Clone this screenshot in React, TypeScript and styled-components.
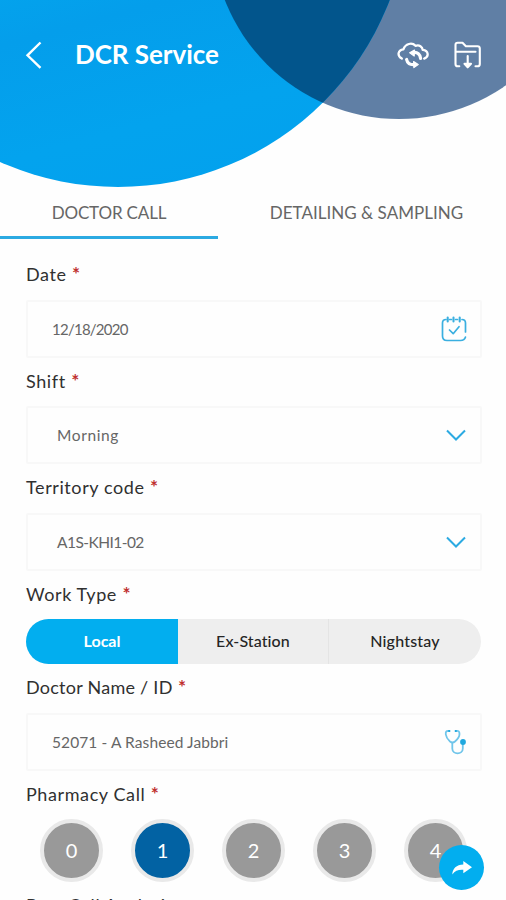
import React from "react";
import styled, { createGlobalStyle } from "styled-components";

const GlobalStyle = createGlobalStyle`
  *, *::before, *::after { box-sizing: border-box; }
  body { margin: 0; background: #fefefe; }
  button { font: inherit; border: 0; padding: 0; margin: 0; background: none; color: inherit; }
`;

const Screen = styled.div`
  position: relative;
  width: 506px;
  height: 900px;
  overflow: hidden;
  background: #fefefe;
  font-family: Lato, "Noto Sans", sans-serif;
  color: #303030;
`;

const Header = styled.header`
  position: relative;
  height: 188px;
  overflow: hidden;
`;

const Disc = styled.div<{ $x: number; $y: number; $r: number; $fill: string }>`
  position: absolute;
  left: ${(p) => p.$x - p.$r}px;
  top: ${(p) => p.$y - p.$r}px;
  width: ${(p) => p.$r * 2}px;
  height: ${(p) => p.$r * 2}px;
  border-radius: 50%;
  overflow: hidden;
  background: ${(p) => p.$fill};
`;

const TitleBar = styled.div`
  position: relative;
  display: flex;
  align-items: center;
  height: 110px;
  padding: 0 23px 0 24px;
  color: #fff;
`;

const Title = styled.h1`
  flex: 1;
  margin: 0 0 2px 33px;
  font-size: 26px;
  line-height: 32px;
  font-weight: 700;
  letter-spacing: -0.05px;
`;

const IconButton = styled.button<{ $gap?: number }>`
  display: flex;
  margin-left: ${(p) => p.$gap ?? 0}px;
`;

const Tabs = styled.nav`
  display: flex;
  height: 51px;
`;

const Tab = styled.button<{ $active?: boolean; $width: number; $spacing: number }>`
  flex: none;
  width: ${(p) => p.$width}px;
  border-bottom: 3px solid ${(p) => (p.$active ? "#2caae2" : "transparent")};
  font-size: 17px;
  letter-spacing: ${(p) => p.$spacing}px;
  color: #666;
`;

const Form = styled.main`
  padding: 12px 24px 0 26px;
`;

const Label = styled.div<{ $spacing?: number; $line?: number }>`
  height: 48.5px;
  line-height: ${(p) => p.$line ?? 47}px;
  font-size: 18px;
  letter-spacing: ${(p) => p.$spacing ?? 0.6}px;
  color: #303030;
  white-space: nowrap;
`;

const Required = styled.span`
  margin-left: 5.5px;
  color: #c0302f;
  font-size: 19px;
  font-weight: 700;
  line-height: 1;
`;

const Field = styled.div<{ $indent: number; $spacing: number; $end?: number; $size?: number }>`
  display: flex;
  align-items: center;
  justify-content: space-between;
  height: 58px;
  padding: 0 ${(p) => p.$end ?? 13}px 0 ${(p) => p.$indent}px;
  border: 2px solid #f8f8f8;
  border-radius: 2px;
  background: #fefefe;
  font-size: ${(p) => p.$size ?? 15.5}px;
  letter-spacing: ${(p) => p.$spacing}px;
  color: #666;
`;

const Segments = styled.div`
  display: grid;
  grid-template-columns: 152px 151px 1fr;
  width: 455px;
  height: 45px;
  border-radius: 23px;
  overflow: hidden;
  background: #eeeeee;
`;

const Segment = styled.button<{ $active?: boolean; $divided?: boolean; $spacing: number }>`
  padding-bottom: 2px;
  border-right: ${(p) => (p.$divided ? "1px solid #e4e4e4" : "0")};
  background: ${(p) => (p.$active ? "#02aeef" : "transparent")};
  color: ${(p) => (p.$active ? "#fff" : "#252525")};
  font-size: 16px;
  font-weight: ${(p) => (p.$active ? 700 : 500)};
  letter-spacing: ${(p) => p.$spacing}px;
`;

const Counts = styled.div`
  display: flex;
  gap: 28px;
  height: 63px;
  margin: 0 -40px 0 14px;
`;

const Count = styled.button<{ $active?: boolean }>`
  flex: none;
  width: 63px;
  height: 63px;
  padding-bottom: 2px;
  border: 4px solid #e9e9e9;
  border-radius: 50%;
  background: ${(p) => (p.$active ? "#0262a3" : "#999999")};
  color: #fff;
  font-size: 20px;
`;

const ShareButton = styled.button`
  position: absolute;
  left: 439px;
  top: 845px;
  display: flex;
  align-items: center;
  justify-content: center;
  width: 45px;
  height: 45px;
  border-radius: 50%;
  background: #02aeef;
`;

const BackIcon = () => (
  <svg width="18" height="30" viewBox="0 0 18 30" fill="none" stroke="#fff" strokeWidth="2.4">
    <path d="M16.500 2.500 3.500 15.300l13 12.500" />
  </svg>
);

const CloudSyncIcon = () => (
  <svg width="32" height="28" viewBox="0 0 32 28" fill="none" stroke="#fff" strokeWidth="2.3" strokeLinecap="round" strokeLinejoin="round">
    <path d="M4.800 17.600C-.2 14.800.8 8.900 6.400 8.300C8.400 2.600 15 1 18.500 4.800C22.500 3.600 25.400 5.700 25.700 8.900C31.800 9.600 32.200 15.800 27.200 17.600" />
    <path d="M16.500 11.500C20.500 11 23.200 13.300 23.600 17.500" strokeWidth="3.200" />
    <path d="m17.500 9-4.800 2.700 4.500 3.300z" fill="#fff" strokeWidth="1.2" />
    <path d="M9.600 18.500c.8 3.600 3.600 5.300 7.200 5.200" strokeWidth="3.200" />
    <path d="m16.600 20.600 4.600 3-4.300 3z" fill="#fff" strokeWidth="1.200" />
  </svg>
);

const FolderDownIcon = () => (
  <svg width="30" height="28" viewBox="0 0 30 28" fill="none" stroke="#fff" strokeWidth="2.1" strokeLinecap="round" strokeLinejoin="round">
    <path d="M6.300 25.300H4.700Q2.500 25.300 2.500 23V4Q2.500 1.700 4.700 1.700h4.800l3.400 3.500h11.600q2.300 0 2.300 2.300V23q0 2.300-2.300 2.300h-2" />
    <path d="M3 10.800h19.500M14.700 15v10" />
    <path d="m11.500 22.800 3.200 3.500 3.300-3.500z" fill="#fff" />
  </svg>
);

const CalendarIcon = () => (
  <svg width="28" height="28" viewBox="0 0 28 28" fill="none" stroke="#3aafe0" strokeWidth="1.7" strokeLinecap="round" strokeLinejoin="round">
    <path d="M6 4.500Q2.500 4.500 2.500 8v13q0 4.500 4.500 4.500h13.500q4 0 5-3.500M9.500 4.500h2M15.500 4.500h2M22 4.500q3.500 0 3.500 3.500v9" />
    <path d="M7.700 2.500v4M13.500 2.500v4M19.700 2.500v4" strokeWidth="2.100" />
    <path d="m9.500 15 3.700 3.700 5.800-7" />
  </svg>
);

const ChevronIcon = () => (
  <svg width="22" height="14" viewBox="0 0 22 14" fill="none" stroke="#2caae2" strokeWidth="2">
    <path d="m2 2.500 9 9 9-9" />
  </svg>
);

const StethoscopeIcon = () => (
  <svg width="24" height="28" viewBox="0 0 24 28" fill="none" stroke="#70c5ea" strokeWidth="1.8" strokeLinecap="round">
    <path d="M5.300 3C2 2.500 1.500 4 1.800 6.500C2.200 9.500 4 11.700 6 13.500q2.500 2 5 0C14 11 15.500 8.500 15.500 6C15.500 3.500 14.500 2.500 12 3" />
    <path d="M8.300 15v5.500c0 6.500 10.500 6.500 10.500 0V17" />
    <circle cx="19" cy="14" r="2.900" fill="#20a8df" stroke="none" />
    <path d="M5 3h.5M11.500 3h.5" stroke="#20a8df" />
  </svg>
);

const ShareIcon = () => (
  <svg width="22" height="16" viewBox="0 0 22 16">
    <path d="M12.300 1 21 7.300l-8.700 6V9.800C7.300 9.500 4 10.800 1.300 14.500C1.500 8.500 5.500 4.800 12.300 4.500z" fill="#fff" />
  </svg>
);

const BLUE = "linear-gradient(165deg, #02aef0 42%, #049eeb 66%, #03a3ee 82%, #03a0ed 100%)";

export default function App() {
  return (
    <Screen>
      <GlobalStyle />
      <Header>
        <Disc $x={399} $y={-68} $r={187} $fill="#607fa5" />
        <Disc $x={118} $y={-104} $r={291} $fill={BLUE}>
          <Disc $x={572} $y={327} $r={187} $fill="#02558c" />
        </Disc>
        <TitleBar>
          <IconButton aria-label="Back"><BackIcon /></IconButton>
          <Title>DCR Service</Title>
          <IconButton aria-label="Sync"><CloudSyncIcon /></IconButton>
          <IconButton aria-label="Downloads" $gap={24}><FolderDownIcon /></IconButton>
        </TitleBar>
      </Header>
      <Tabs>
        <Tab $active $width={218} $spacing={-0.15}>DOCTOR CALL</Tab>
        <Tab $width={297} $spacing={0.02}>DETAILING &amp; SAMPLING</Tab>
      </Tabs>
      <Form>
        <Label>Date<Required>*</Required></Label>
        <Field $indent={24} $end={12} $size={15} $spacing={-0.75}><span>12/18/2020</span><CalendarIcon /></Field>
        <Label>Shift<Required>*</Required></Label>
        <Field $indent={29} $spacing={0.6}>Morning<ChevronIcon /></Field>
        <Label>Territory code<Required>*</Required></Label>
        <Field $indent={29} $spacing={-0.55}>A1S-KHI1-02<ChevronIcon /></Field>
        <Label>Work Type<Required>*</Required></Label>
        <Segments>
          <Segment $active $spacing={0}>Local</Segment>
          <Segment $divided $spacing={0.1}>Ex-Station</Segment>
          <Segment $spacing={0.2}>Nightstay</Segment>
        </Segments>
        <Label $spacing={0.25}>Doctor Name / ID<Required>*</Required></Label>
        <Field $indent={24} $end={12} $spacing={0.1}>52071 - A Rasheed Jabbri<StethoscopeIcon /></Field>
        <Label>Pharmacy Call<Required>*</Required></Label>
        <Counts>
          {[0, 1, 2, 3, 4].map((n) => (
            <Count key={n} $active={n === 1}>{n}</Count>
          ))}
        </Counts>
        <Label $line={46}>Post Call Analysis</Label>
      </Form>
      <ShareButton aria-label="Share"><ShareIcon /></ShareButton>
    </Screen>
  );
}
